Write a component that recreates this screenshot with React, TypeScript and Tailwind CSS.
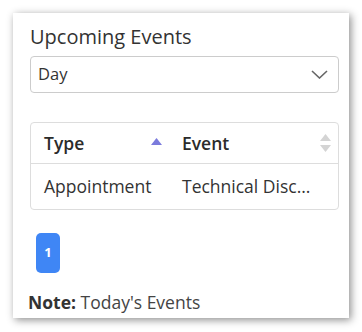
export default function App() {
  return (
    <div className="w-[362px] h-[332px] bg-white p-[13px] font-['Open_Sans',sans-serif] text-[#333]">
      <div className="w-[336px] h-[305px] bg-white shadow-[2px_2px_8px_rgba(0,0,0,0.45)] pl-[17px] pr-[10px] pt-[8px]">
        <h2 className="text-[20px] leading-[32px] text-[#333]">Upcoming Events</h2>

        <div className="mt-[3px] h-[37px] w-[309px] flex items-center justify-between border border-[#ccc] rounded-[4px] pl-[7px] pr-[10px]">
          <span className="text-[16.5px]">Day</span>
          <svg width="17" height="9" viewBox="0 0 17 9" fill="none" stroke="#666" strokeWidth="1.6">
            <path d="M1 1l7.5 7 7.5-7" />
          </svg>
        </div>

        <div className="mt-[29px] w-[309px] border border-[#ddd] rounded-[4px]">
          <div className="h-[41px] flex items-center border-b border-[#ddd] text-[17.5px] font-semibold text-[#2b2b2b]">
            <div className="w-[150px] pl-[13px] pr-[19px] flex items-center justify-between">
              <span>Type</span>
              <svg width="11" height="7" viewBox="0 0 11 7" className="-mt-[4px]">
                <path d="M5.5 0L11 7H0z" fill="#7b7bdc" />
              </svg>
            </div>
            <div className="flex-1 pl-[1px] pr-[7px] flex items-center justify-between">
              <span>Event</span>
              <svg width="11" height="18" viewBox="0 0 11 18">
                <path d="M5.5 0L11 7H0z" fill="#d4d4d4" />
                <path d="M5.5 18L11 11H0z" fill="#d4d4d4" />
              </svg>
            </div>
          </div>
          <div className="h-[45px] flex items-center text-[17.5px]">
            <div className="w-[150px] pl-[13px]">Appointment</div>
            <div className="flex-1 pl-[1px]">Technical Disc...</div>
          </div>
        </div>

        <div className="mt-[23px] ml-[6px] w-[24px] h-[40px] rounded-[5px] bg-[#3f86f5] flex items-center justify-center text-white text-[13px] font-bold">
          1
        </div>

        <p className="mt-[16px] -ml-[2px] text-[17.5px] leading-[26px] text-[#444]">
          <span className="font-bold text-[#333]">Note:</span> Today's Events
        </p>
      </div>
    </div>
  );
}
